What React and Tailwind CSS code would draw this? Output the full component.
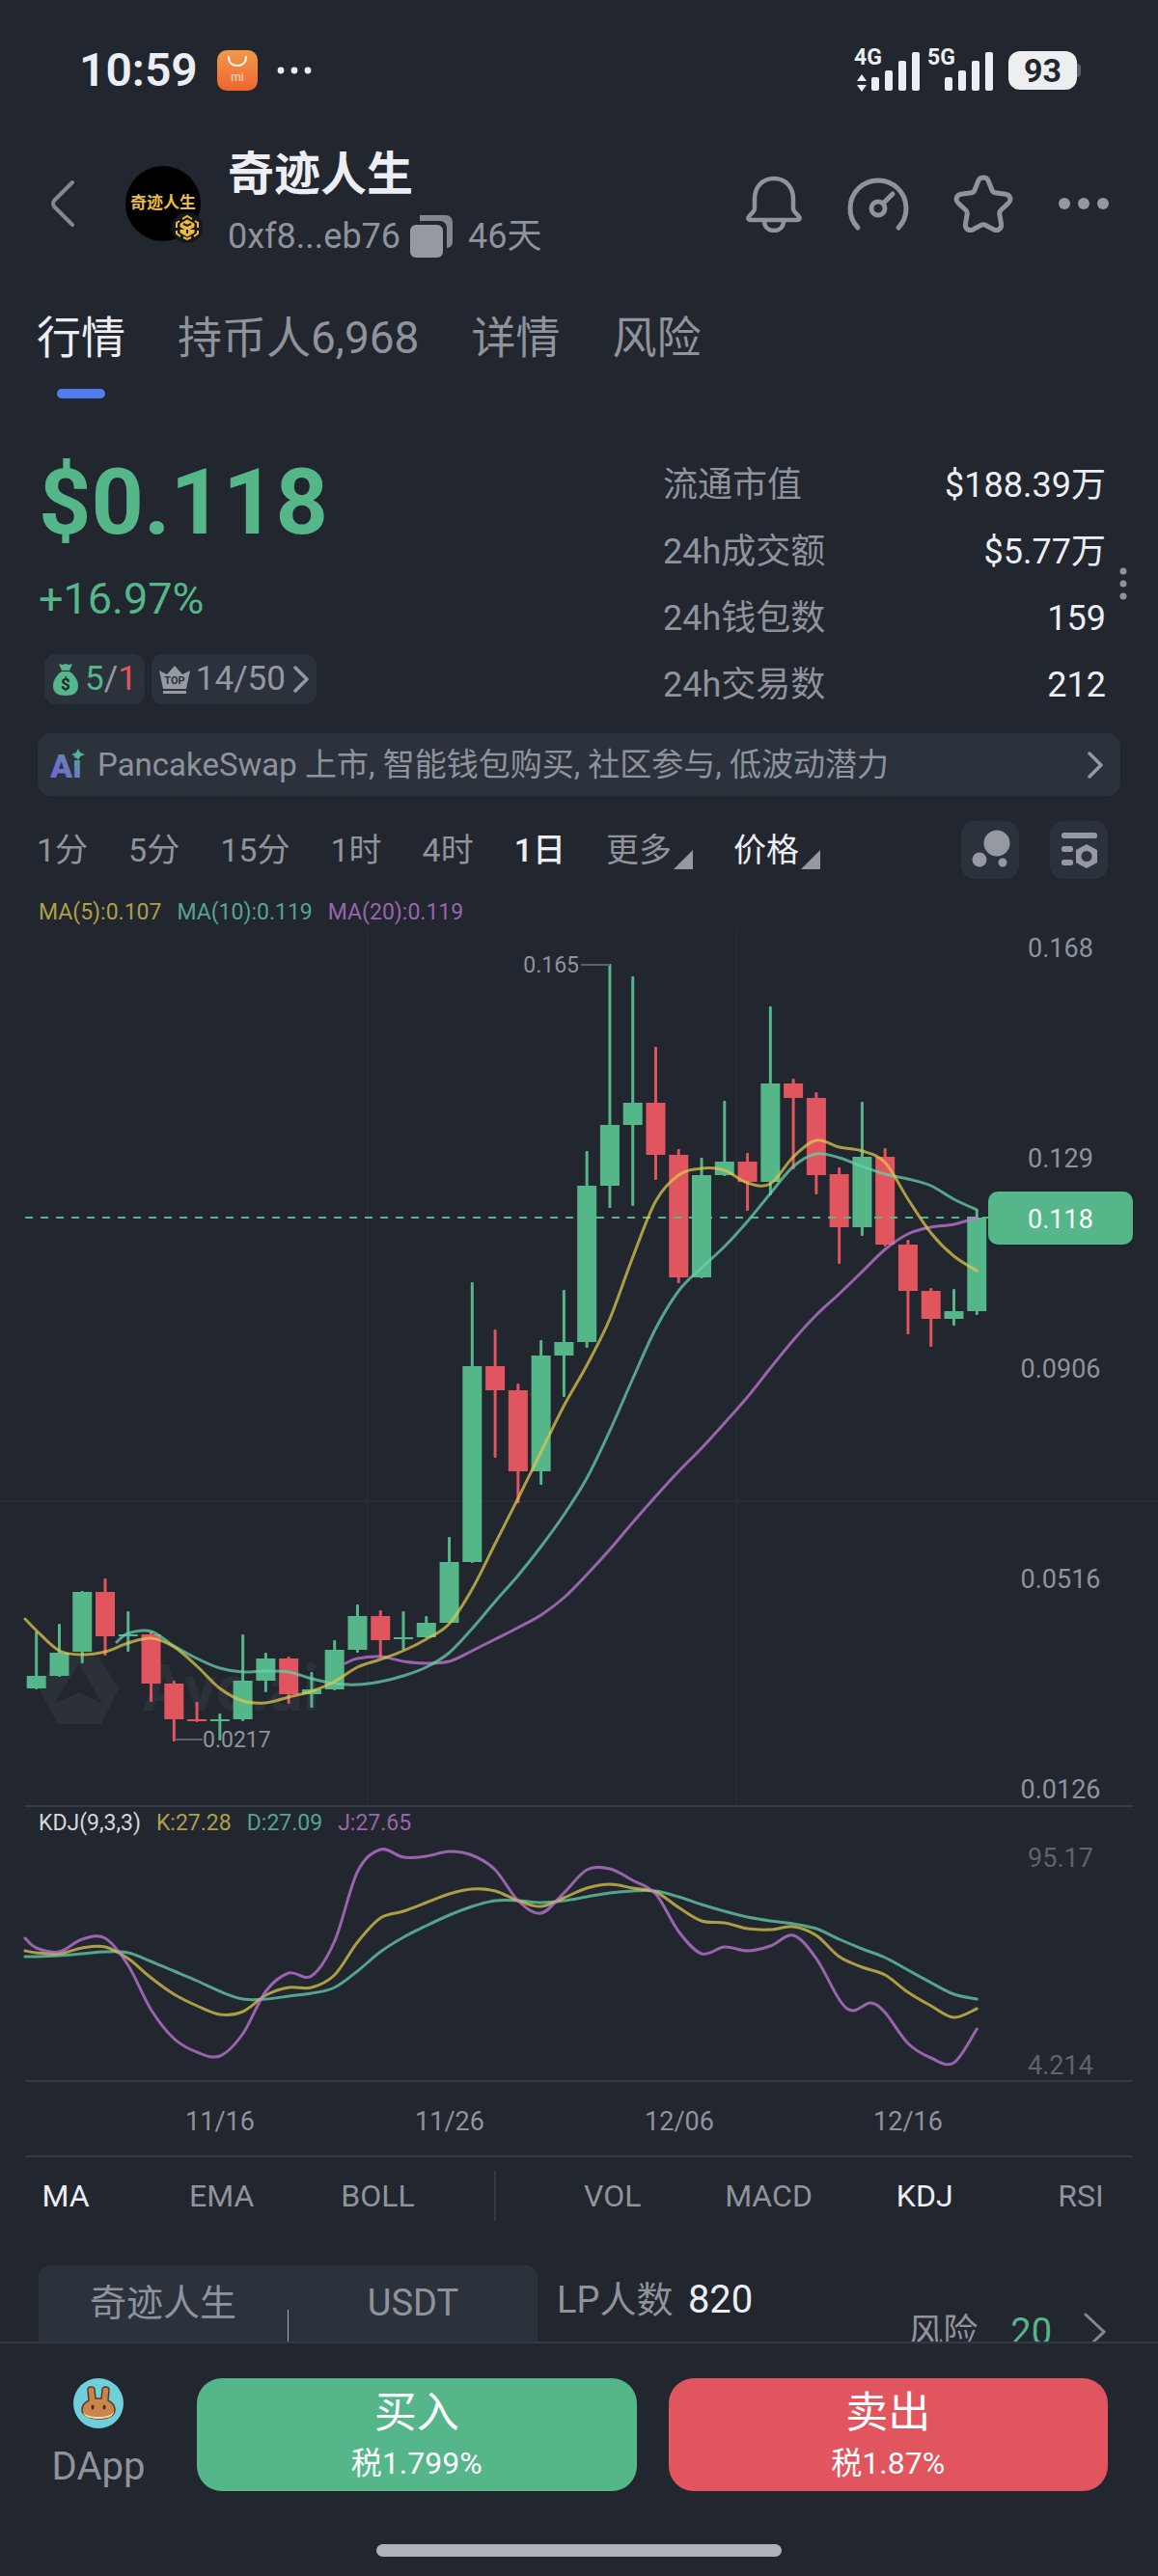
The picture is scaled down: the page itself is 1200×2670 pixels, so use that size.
import React, { useState } from 'react'

// top of body, bottom of body and wick ends, in chart units; u = up, d = down
const candles = [
  [1691, 1737, 1750, 1751, 'u'], [1683, 1713, 1737, 1738, 'u'], [1649, 1650, 1712, 1724, 'u'],
  [1636, 1650, 1696, 1716, 'd'], [1670, 1694, 1696, 1712, 'u'], [1691, 1694, 1745, 1764, 'd'],
  [1742, 1745, 1782, 1805, 'd'], [1764, 1782, 1784, 1785, 'd'], [1776, 1782, 1784, 1804, 'u'],
  [1694, 1742, 1782, 1784, 'u'], [1713, 1719, 1742, 1754, 'u'], [1717, 1719, 1756, 1766, 'd'],
  [1733, 1751, 1756, 1770, 'u'], [1700, 1710, 1751, 1752, 'u'], [1663, 1675, 1710, 1713, 'u'],
  [1669, 1675, 1700, 1718, 'd'], [1670, 1697, 1699, 1710, 'u'], [1675, 1682, 1697, 1698, 'u'],
  [1593, 1619, 1682, 1682, 'u'], [1329, 1416, 1619, 1620, 'u'], [1378, 1416, 1441, 1511, 'd'],
  [1434, 1441, 1525, 1558, 'd'], [1389, 1405, 1525, 1539, 'u'], [1337, 1391, 1405, 1448, 'u'],
  [1193, 1229, 1391, 1397, 'u'], [999, 1166, 1229, 1252, 'u'], [1012, 1143, 1166, 1250, 'u'],
  [1085, 1143, 1197, 1223, 'd'], [1191, 1197, 1324, 1330, 'd'], [1200, 1218, 1324, 1325, 'u'],
  [1141, 1204, 1218, 1219, 'u'], [1195, 1204, 1225, 1255, 'd'], [1043, 1123, 1225, 1239, 'u'],
  [1118, 1123, 1138, 1212, 'd'], [1132, 1138, 1218, 1238, 'd'], [1210, 1217, 1272, 1310, 'd'],
  [1142, 1199, 1272, 1281, 'u'], [1190, 1199, 1290, 1292, 'd'], [1285, 1290, 1338, 1383, 'd'],
  [1335, 1338, 1367, 1396, 'd'], [1336, 1359, 1367, 1374, 'u'], [1254, 1262, 1359, 1363, 'u'],
]

const cx = (i) => 37.7 + 23.77 * i

const series = (from, head, values) => [...head, ...values.map((y, i) => [cx(from + i), y])]

const ma5 = series(0, [[26, 1678]], [
  1690, 1711, 1715, 1712, 1703, 1698, 1707, 1727, 1750, 1763, 1765, 1759, 1753, 1743, 1728, 1720, 1711, 1699, 1683, 1647, 1600,
  1553, 1505, 1457, 1415, 1367, 1303, 1245, 1218, 1211, 1213, 1226, 1227, 1199, 1182, 1189, 1193, 1205, 1243, 1278, 1302, 1317,
])
const ma10 = series(4, [[121, 1702]], [
  1693, 1691, 1706, 1719, 1729, 1733, 1732, 1733, 1740, 1745, 1746, 1743, 1737, 1728, 1713, 1688, 1660, 1633, 1603,
  1570, 1532, 1483, 1429, 1377, 1338, 1314, 1292, 1266, 1237, 1209, 1196, 1200, 1209, 1217, 1222, 1229, 1243, 1254,
])
const ma20 = series(14, [[358, 1724]], [
  1719, 1717, 1722, 1724, 1722, 1711, 1699, 1687, 1674, 1656, 1632, 1606, 1578, 1551,
  1525, 1501, 1475, 1448, 1418, 1389, 1363, 1341, 1318, 1295, 1279, 1272, 1269, 1262,
])
const kLine = series(0, [[26, 2022]], [
  2024, 2025, 2019, 2018, 2030, 2050, 2067, 2079, 2088, 2085, 2068, 2060, 2060, 2047, 2013, 1988, 1981, 1972, 1963, 1958, 1960,
  1970, 1976, 1967, 1957, 1953, 1957, 1961, 1977, 1991, 1993, 1999, 2000, 1997, 2006, 2028, 2039, 2047, 2065, 2079, 2091, 2082,
])
const dLine = series(0, [[26, 2028]], [
  2028, 2027, 2025, 2023, 2024, 2033, 2043, 2053, 2064, 2072, 2072, 2069, 2066, 2060, 2043, 2023, 2008, 1996, 1985, 1976, 1970,
  1970, 1972, 1970, 1966, 1962, 1960, 1960, 1966, 1974, 1981, 1987, 1991, 1994, 1999, 2010, 2020, 2029, 2042, 2055, 2067, 2072,
])
const jLine = [
  ...series(0, [[26, 2009]], [
    2019, 2023, 2010, 2009, 2037, 2083, 2113, 2127, 2131, 2108, 2064, 2045, 2048, 2012, 1940, 1917, 1925, 1924, 1919, 1923, 1938,
    1970, 1983, 1962, 1938, 1937, 1949, 1963, 2002, 2025, 2018, 2022, 2017, 2006, 2030,
  ]),
  ...series(37, [[870, 2073], [884, 2084], [902, 2076]], [2086, 2118, 2133, 2138, 2103]),
]

const smooth = (pts) => {
  let d = `M${pts[0][0]} ${pts[0][1]}`
  for (let i = 0; i < pts.length - 1; i++) {
    const p0 = pts[i - 1] || pts[i]
    const p1 = pts[i]
    const p2 = pts[i + 1]
    const p3 = pts[i + 2] || p2
    d += `C${p1[0] + (p2[0] - p0[0]) / 6} ${p1[1] + (p2[1] - p0[1]) / 6} ${p2[0] - (p3[0] - p1[0]) / 6} ${p2[1] - (p3[1] - p1[1]) / 6} ${p2[0]} ${p2[1]}`
  }
  return d
}

const Line = ({ pts, color }) => (
  <path d={smooth(pts)} fill="none" stroke={color} strokeOpacity="0.75" strokeWidth="3" strokeLinecap="round" />
)

const Bars = ({ arrows }) => (
  <svg viewBox="0 -8 68 62" className="h-[62px] w-[68px]" fill="#eceef3">
    <text x="0" y="17" fontSize="23" fontWeight="700">{arrows ? '4G' : '5G'}</text>
    {arrows && <path d="M8 27l5 7H3zM8 45l5-7H3z" />}
    <rect x="18" y="30" width="8" height="14" rx="2" />
    <rect x="32" y="23" width="8" height="21" rx="2" />
    <rect x="46" y="13" width="8" height="31" rx="2" />
    <rect x="60" y="4" width="8" height="40" rx="2" />
  </svg>
)

const StatusBar = () => (
  <div className="flex h-[146px] shrink-0 items-center pr-20 pl-[82px]">
    <span className="text-[48px] font-semibold text-[#eceef3]">10:59</span>
    <svg viewBox="0 0 42 42" className="ml-5 size-[42px]">
      <defs>
        <linearGradient id="mi" x1="0" y1="0" x2="0" y2="1">
          <stop offset="0" stopColor="#f2994a" />
          <stop offset="1" stopColor="#ee6530" />
        </linearGradient>
      </defs>
      <rect width="42" height="42" rx="10" fill="url(#mi)" />
      <path d="M12 7c0 6 4 9 9 9s9-3 9-9" fill="none" stroke="#fff" strokeWidth="2" strokeLinecap="round" />
      <text x="21" y="32" fontSize="12" fill="#fbe0d0" textAnchor="middle">mi</text>
    </svg>
    <svg viewBox="0 0 36 8" className="ml-5 h-2 w-9" fill="#eceef3">
      <circle cx="4" cy="4" r="3.4" />
      <circle cx="18" cy="4" r="3.4" />
      <circle cx="32" cy="4" r="3.4" />
    </svg>
    <div className="ml-auto flex items-center gap-2">
      <Bars arrows />
      <Bars />
      <div className="ml-2 flex items-center">
        <span className="flex h-10 w-[71px] items-center justify-center rounded-xl bg-[#eceef0] text-[34px] font-bold text-[#22262e]">93</span>
        <span className="h-[14px] w-1 rounded-r bg-[#5b5f67]" />
      </div>
    </div>
  </div>
)

const Header = () => (
  <header className="flex h-[130px] shrink-0 items-center pr-[50px] pl-[52px]">
    <button aria-label="返回">
      <svg viewBox="0 0 26 50" className="h-[50px] w-[26px]" fill="none" stroke="#85878b" strokeWidth="4" strokeLinecap="round" strokeLinejoin="round">
        <path d="M23 3L4 22q-2 3 0 6l19 19" />
      </svg>
    </button>
    <div className="relative ml-[52px] flex size-[78px] items-center justify-center rounded-full bg-black">
      <span className="text-[17px] font-bold whitespace-nowrap text-[#e9bd45]">奇迹人生</span>
      <svg viewBox="0 0 32 32" className="absolute -right-0.5 -bottom-0.5 size-8" fill="none" stroke="#f0b93a" strokeWidth="2">
        <circle cx="16" cy="16" r="16" fill="#14171b" stroke="none" />
        <path d="M11 7l5-3 5 3M24 9l3 2v5M27 19v3l-4 3M20 26l-4 2-4-2M9 25l-4-3v-3M5 16v-5l3-2" />
        <path d="M9 12l7-4 7 4v3l-7 4-7-4zM9 18v3l7 4 7-4v-3" fill="#f0b93a" strokeWidth="1" />
        <path d="M12 12l4 2 4-2M16 18v4" stroke="#14171b" />
      </svg>
    </div>
    <div className="ml-7 pt-1">
      <h1 className="text-[48px] leading-[64px] font-bold text-[#eceef3]">奇迹人生</h1>
      <div className="flex items-center text-[36px] leading-[64px] text-[#8f939b]">
        <span>0xf8...eb76</span>
        <button aria-label="复制" className="ml-2.5">
          <svg viewBox="0 0 44 44" className="size-11" fill="#9599a1">
            <rect x="0" y="10" width="34" height="34" rx="6" />
            <path d="M10 0h27a7 7 0 0 1 7 7v21a6 6 0 0 1-6 6V13a7 7 0 0 0-7-7H10z" fill="#83878f" />
          </svg>
        </button>
        <span className="ml-4">46天</span>
      </div>
    </div>
    <div className="ml-auto flex items-center gap-[46px]">
      <button aria-label="提醒">
        <svg viewBox="0 0 60 60" className="size-[60px]" fill="none" stroke="#8f939b" strokeWidth="4.5" strokeLinecap="round" strokeLinejoin="round">
          <path d="M30 4C18 4 10 13 10 25v10c0 4-5 6-6.500 9.500C3 46 4 47 5.500 47h49c1.500 0 2.500-1 2-2.500C55 41 50 39 50 35V25C50 13 42 4 30 4Z" />
          <path d="M20 48c0 6 4 10 10 10s10-4 10-10" />
        </svg>
      </button>
      <button aria-label="仪表">
        <svg viewBox="0 0 64 58" className="h-[58px] w-16" fill="none" stroke="#8f939b" strokeWidth="5" strokeLinecap="round">
          <path d="M11 54A29 29 0 1 1 53 54" />
          <circle cx="32" cy="34" r="7" />
          <path d="M37 29L47 19" />
        </svg>
      </button>
      <button aria-label="收藏">
        <svg viewBox="0 0 62 60" className="h-[60px] w-[62px]" fill="none" stroke="#8f939b" strokeWidth="5" strokeLinejoin="round">
          <path d="M26 6c2-4 8-4 10 0l4 10c.6 1.500 1.500 2.500 3 2.700l11 1.500c5 .8 6.500 6 3 9.300l-8 7.500c-1 1-1.500 2.500-1.200 4l1.700 10c.8 5-3.500 8-8 5.700l-8.500-4.500c-1.300-.7-2.700-.7-4 0l-8.500 4.500c-4.500 2.300-8.800-.7-8-5.700l1.700-10c.3-1.500-.2-3-1.200-4L5 29.500c-3.500-3.300-2-8.500 3-9.300l11-1.500c1.500-.2 2.400-1.200 3-2.700Z" />
        </svg>
      </button>
      <button aria-label="更多操作">
        <svg viewBox="0 0 54 14" className="h-[14px] w-[54px]" fill="#97979b">
          <circle cx="7" cy="7" r="6" />
          <circle cx="27" cy="7" r="6" />
          <circle cx="47" cy="7" r="6" />
        </svg>
      </button>
    </div>
  </header>
)

const tabs = ['行情', '持币人6,968', '详情', '风险']

const Tabs = () => {
  const [tab, setTab] = useState('行情')
  return (
    <nav className="flex shrink-0 items-start gap-[54px] px-[38px] pt-[42px] text-[46px] leading-[64px]">
      {tabs.map((t) => (
        <button key={t} onClick={() => setTab(t)} className={t === tab ? 'flex flex-col items-center text-[#eceef3]' : 'text-[#8f939b]'}>
          {t}
          {t === tab && <span className="mt-[21px] h-2.5 w-[50px] rounded-full bg-[#4f7df0]" />}
        </button>
      ))}
    </nav>
  )
}

const stats = [
  ['流通市值', '$188.39万'],
  ['24h成交额', '$5.77万'],
  ['24h钱包数', '159'],
  ['24h交易数', '212'],
]

const Chevron = ({ className }) => (
  <svg viewBox="0 0 16 28" className={className} fill="none" stroke="#9599a1" strokeWidth="3.5" strokeLinecap="round" strokeLinejoin="round">
    <path d="M2 2l12 12L2 26" />
  </svg>
)

const Summary = () => (
  <section className="relative flex shrink-0 justify-between pt-14 pr-[54px] pl-10">
    <div>
      <p className="mt-1 text-[95px] leading-[96px] font-bold text-[#55b68a]">$0.118</p>
      <p className="mt-6 text-[45px] leading-[56px] text-[#55b68a]">+16.97%</p>
      <div className="mt-[29px] ml-1.5 flex gap-[7px] text-[35px] text-[#9599a1]">
        <button className="flex h-[52px] items-center rounded-xl bg-[#2c323c] px-2">
          <svg viewBox="0 0 28 36" className="mr-1.5 h-9 w-7" fill="#55b68a">
            <path d="M7 2l4 1 3-1 3 1 4-1-3 7h-8z" />
            <path d="M10 10h8c5 3 9 9 9 15 0 7-5 10-13 10S1 32 1 25c0-6 4-12 9-15z" />
            <text x="14" y="29" fontSize="17" fontWeight="700" fill="#22262e" textAnchor="middle">$</text>
          </svg>
          <span className="text-[#55b68a]">5</span>/<span className="text-[#e1555f]">1</span>
        </button>
        <button className="flex h-[52px] items-center rounded-xl bg-[#2c323c] px-2">
          <svg viewBox="0 0 32 32" className="mr-1.5 size-8" fill="#9599a1">
            <path d="M0 7l8 4 8-9 8 9 8-4-4 19H4z" />
            <rect x="4" y="28" width="24" height="3" />
            <text x="16" y="21" fontSize="11" fontWeight="700" fill="#2c323c" textAnchor="middle">TOP</text>
          </svg>
          14/50
          <Chevron className="ml-2 h-7 w-4" />
        </button>
      </div>
    </div>
    <dl className="w-[459px] text-[36px] leading-[69px]">
      {stats.map(([label, value]) => (
        <div key={label} className="flex justify-between">
          <dt className="text-[#8f939b]">{label}</dt>
          <dd className="text-[#eceef3]">{value}</dd>
        </div>
      ))}
    </dl>
    <svg viewBox="0 0 8 36" className="absolute top-[174px] right-8 h-9 w-2" fill="#8f939b">
      <circle cx="4" cy="5" r="3.500" />
      <circle cx="4" cy="18" r="3.500" />
      <circle cx="4" cy="31" r="3.500" />
    </svg>
  </section>
)

const AiBanner = () => (
  <button className="mx-[39px] mt-[15px] flex h-[65px] shrink-0 items-center rounded-[14px] bg-[#2c323c] pr-[18px] pl-3 text-left text-[33px] text-[#8f939b]">
    <svg viewBox="0 -8 38 50" className="mr-3 h-[50px] w-[38px]">
      <defs>
        <linearGradient id="ai" x1="0" y1="1" x2="1" y2="0">
          <stop offset="0" stopColor="#8257d8" />
          <stop offset="0.5" stopColor="#6a78c0" />
          <stop offset="1" stopColor="#4fb594" />
        </linearGradient>
      </defs>
      <text x="1" y="30" fontSize="34" fontWeight="900" fill="url(#ai)">Ai</text>
      <path d="M30 0l2 4 5 2-5 2-2 4-2-4-5-2 5-2z" fill="#4fb594" />
    </svg>
    <span className="flex-1">PancakeSwap 上市, 智能钱包购买, 社区参与, 低波动潜力</span>
    <Chevron className="h-7 w-4" />
  </button>
)

const frames = ['1分', '5分', '15分', '1时', '4时', '1日']

const Corner = () => (
  <svg viewBox="0 0 20 20" className="mt-5 ml-0.5 size-5" fill="#9599a1">
    <path d="M20 0v20H0z" />
  </svg>
)

const Timeframes = () => {
  const [frame, setFrame] = useState('1日')
  return (
    <div className="mt-[26px] flex h-[60px] shrink-0 items-center gap-[42px] pr-[52px] pl-[38px] text-[34px] text-[#8f939b]">
      {frames.map((f) => (
        <button key={f} onClick={() => setFrame(f)} className={f === frame ? 'font-medium text-[#eceef3]' : ''}>{f}</button>
      ))}
      <button className="flex items-center">更多<Corner /></button>
      <button className="flex items-center text-[#eceef3]">价格<Corner /></button>
      <div className="ml-auto flex gap-8">
        <button aria-label="气泡图" className="rounded-[14px] bg-[#2c323c]">
          <svg viewBox="0 0 60 60" className="size-[60px]" fill="#9599a1">
            <circle cx="37" cy="23" r="13.500" />
            <circle cx="19" cy="40" r="7.500" />
            <circle cx="43" cy="43" r="4.500" />
          </svg>
        </button>
        <button aria-label="图表设置" className="rounded-[14px] bg-[#2c323c]">
          <svg viewBox="0 0 60 60" className="size-[60px]" fill="#9599a1">
            <rect x="12" y="12" width="37" height="6" rx="2.500" />
            <rect x="12" y="26" width="12" height="6" rx="2.500" />
            <rect x="12" y="40" width="12" height="6" rx="2.500" />
            <path fillRule="evenodd" d="M38 24l11 6v13l-11 6-11-6V30zM38 31a5.500 5.500 0 1 0 0 11 5.500 5.500 0 0 0 0-11z" />
          </svg>
        </button>
      </div>
    </div>
  )
}

const Candles = () => (
  <svg viewBox="0 963 1200 908" className="block w-full" fontSize="27">
    <g stroke="#262b33" strokeWidth="2">
      <path d="M381 963V1871M763 963V1871M0 1556H1200" />
    </g>
    <g fill="#2b3039">
      <path fillRule="evenodd" d="M60 1717h42l21 33-18 37H60l-20-37zM82 1724l-26 42 26-12 24 12z" />
      <text x="148" y="1773" fontSize="66" fontWeight="700">Ave.ai</text>
    </g>
    {candles.map(([high, top, bottom, low, dir], i) => (
      <g key={i} fill={dir === 'u' ? '#55b68a' : '#e1555f'}>
        <rect x={cx(i) - 1.5} y={high} width="3" height={low - high} rx="1" />
        <rect x={cx(i) - 10} y={top} width="20" height={bottom - top} />
      </g>
    ))}
    <path d="M26 1262H1024" stroke="#55b68a" strokeWidth="2" strokeDasharray="8 8" />
    <Line pts={ma20} color="#c27ad8" />
    <Line pts={ma10} color="#66d0ac" />
    <Line pts={ma5} color="#dcc64e" />
    <path d="M602 1000h30M182 1803h28" stroke="#5d616a" strokeWidth="2" />
    <g fill="#8f939b" fontSize="23">
      <text x="600" y="1008" textAnchor="end">0.165</text>
      <text x="210" y="1811">0.0217</text>
    </g>
    <rect x="1024" y="1235" width="150" height="55" rx="10" fill="#55b68a" />
    <g fill="#8f939b" textAnchor="middle">
      <text x="1099" y="992">0.168</text>
      <text x="1099" y="1210">0.129</text>
      <text x="1099" y="1273" fill="#fff">0.118</text>
      <text x="1099" y="1428">0.0906</text>
      <text x="1099" y="1646">0.0516</text>
      <text x="1099" y="1864">0.0126</text>
    </g>
  </svg>
)

const Kdj = () => (
  <svg viewBox="0 1906 1200 328" className="block w-full" fontSize="27" textAnchor="middle">
    <Line pts={dLine} color="#66d0ac" />
    <Line pts={kLine} color="#dcc64e" />
    <Line pts={jLine} color="#c27ad8" />
    <path d="M26 2157H1174" stroke="#343943" strokeWidth="2" />
    <g fill="#5f636c">
      <text x="1099" y="1935">95.17</text>
      <text x="1099" y="2150">4.214</text>
    </g>
    <g fill="#8f939b">
      <text x="228" y="2208">11/16</text>
      <text x="466" y="2208">11/26</text>
      <text x="704" y="2208">12/06</text>
      <text x="941" y="2208">12/16</text>
    </g>
  </svg>
)

const Indicator = ({ name, on, toggle }) => (
  <button onClick={() => toggle(name)} className={on ? 'w-24 text-[#eceef3]' : 'w-24 text-[#8f939b]'}>{name}</button>
)

const Indicators = () => {
  const [main, setMain] = useState('MA')
  const [sub, setSub] = useState('KDJ')
  return (
    <div className="flex h-20 shrink-0 items-center justify-between pr-8 pl-5 text-[32px]">
      {['MA', 'EMA', 'BOLL'].map((n) => <Indicator key={n} name={n} on={n === main} toggle={setMain} />)}
      <span className="mx-[7px] h-[52px] w-0.5 bg-[#343943]" />
      {['VOL', 'MACD', 'KDJ', 'RSI'].map((n) => <Indicator key={n} name={n} on={n === sub} toggle={setSub} />)}
    </div>
  )
}

const Pool = () => (
  <section className="mt-8 flex items-start pr-[52px] pl-10 text-[38px] leading-[78px] text-[#8f939b]">
    <div className="flex h-32 w-[517px] shrink-0 rounded-t-xl bg-[#2c323c] text-center">
      <span className="flex-1">奇迹人生</span>
      <span className="mt-[46px] h-12 w-px bg-[#a9abb0]" />
      <span className="flex-1">USDT</span>
    </div>
    <p className="ml-5 leading-[72px]">LP人数 <span className="ml-1.5 text-[40px] text-[#eceef3]">820</span></p>
    <button className="mt-[34px] ml-auto flex items-center text-[36px] leading-[70px]">
      风险
      <span className="ml-[34px] text-[38px] text-[#55b68a]">20</span>
      <svg viewBox="0 0 26 42" className="ml-8 h-[42px] w-[26px]" fill="none" stroke="#85878b" strokeWidth="3" strokeLinecap="round">
        <path d="M3 3l19 18L3 39" />
      </svg>
    </button>
  </section>
)

const Footer = () => (
  <footer className="shrink-0 border-t-2 border-[#343943] bg-[#22262e]">
    <div className="flex items-start pt-9 pr-[52px]">
      <button className="flex w-[204px] shrink-0 flex-col items-center text-[40px] text-[#8f939b]">
        <svg viewBox="0 0 52 52" className="size-[52px]">
          <circle cx="26" cy="26" r="26" fill="#6fd0dc" />
          <path d="M15 12c0-4 7-4 7 0l1 9h6l1-9c0-4 7-4 7 0l-1 11c4 2 7 6 7 10 0 6-7 9-17 9S9 38 9 33c0-4 3-8 7-10z" fill="#c9854c" stroke="#5d3a1e" strokeWidth="1.500" />
          <path d="M10 35c3 4 9 5 16 5s13-1 16-5c-1 5-7 7-16 7s-15-2-16-7z" fill="#f6dfa6" />
          <ellipse cx="20" cy="30" rx="1.500" ry="2.500" fill="#4a2a12" />
          <ellipse cx="32" cy="30" rx="1.500" ry="2.500" fill="#4a2a12" />
        </svg>
        <span className="mt-3 leading-[56px]">DApp</span>
      </button>
      <div className="flex flex-1 gap-[33px] text-white">
        <button className="flex h-[117px] flex-1 flex-col items-center rounded-[26px] bg-[#55b68a] pt-1.5">
          <span className="text-[44px] leading-[60px]">买入</span>
          <span className="text-[32px] leading-[44px]">税1.799%</span>
        </button>
        <button className="flex h-[117px] flex-1 flex-col items-center rounded-[26px] bg-[#e1555f] pt-1.5">
          <span className="text-[44px] leading-[60px]">卖出</span>
          <span className="text-[32px] leading-[44px]">税1.87%</span>
        </button>
      </div>
    </div>
    <div className="mx-auto mt-[52px] mb-5 h-[13px] w-[420px] rounded-full bg-[#b0b2b8]" />
  </footer>
)

const App = () => (
  <div className="flex h-screen flex-col bg-[#22262e] font-[Roboto,'Noto_Sans_CJK_SC',sans-serif]" lang="zh-CN">
    <main className="flex min-h-0 flex-1 flex-col overflow-hidden">
      <StatusBar />
      <Header />
      <Tabs />
      <Summary />
      <AiBanner />
      <Timeframes />
      <div className="mt-[18px] flex shrink-0 gap-4 px-10 text-[23px] leading-[34px]">
        <span className="text-[#ada046]">MA(5):0.107</span>
        <span className="text-[#55a58c]">MA(10):0.119</span>
        <span className="text-[#9a65ad]">MA(20):0.119</span>
      </div>
      <div className="shrink-0"><Candles /></div>
      <div className="mx-[26px] flex shrink-0 gap-4 border-t-2 border-[#343943] px-[14px] text-[23px] leading-[33px]">
        <span className="text-[#d5d7dc]">KDJ(9,3,3)</span>
        <span className="text-[#ada046]">K:27.28</span>
        <span className="text-[#55a58c]">D:27.09</span>
        <span className="text-[#9a65ad]">J:27.65</span>
      </div>
      <div className="shrink-0"><Kdj /></div>
      <div className="mx-[26px] h-0.5 shrink-0 bg-[#343943]" />
      <Indicators />
      <Pool />
    </main>
    <Footer />
  </div>
)

export default App
